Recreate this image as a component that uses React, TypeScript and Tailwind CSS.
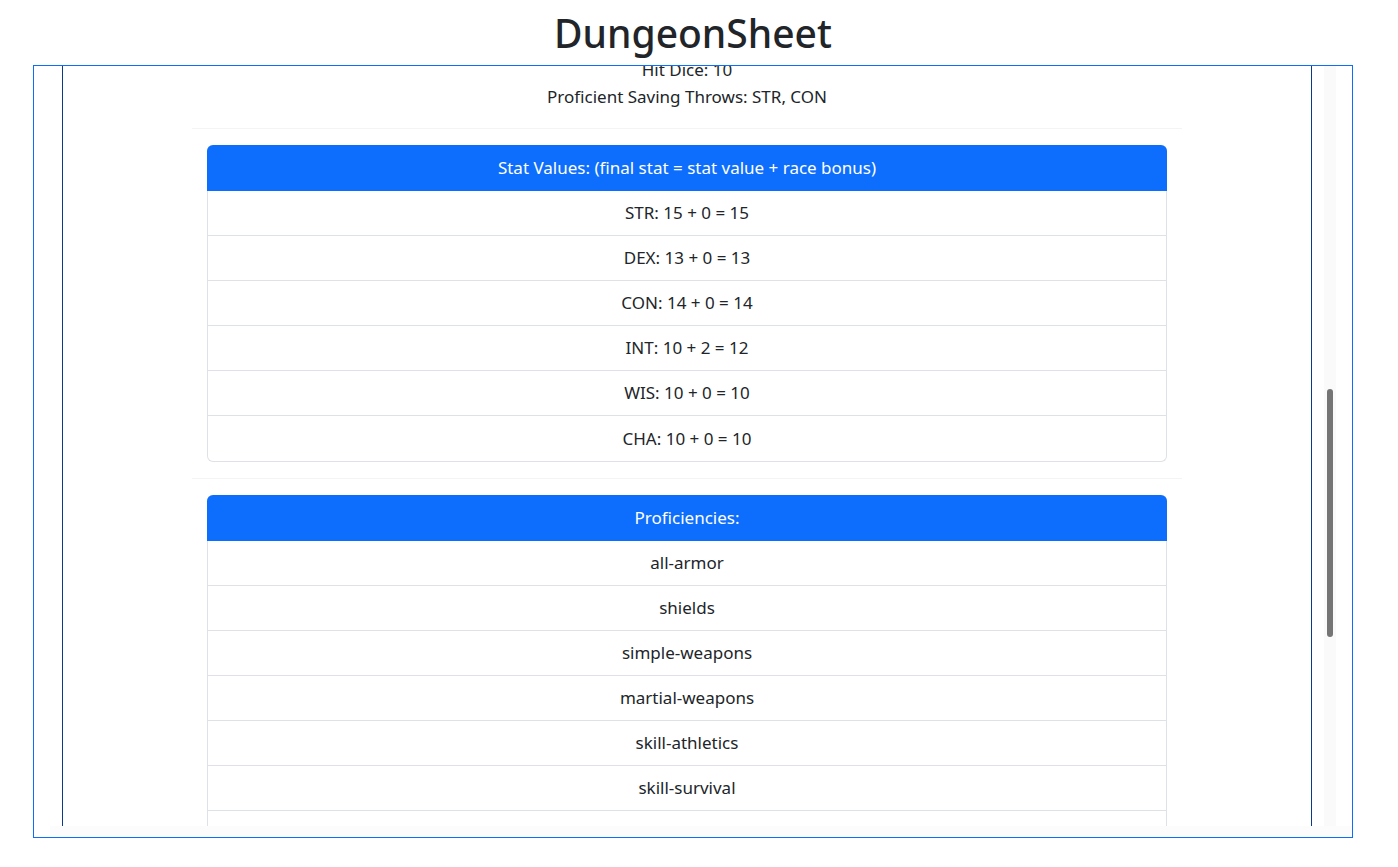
import React from "react";

const stats = [
  "STR: 15 + 0 = 15",
  "DEX: 13 + 0 = 13",
  "CON: 14 + 0 = 14",
  "INT: 10 + 2 = 12",
  "WIS: 10 + 0 = 10",
  "CHA: 10 + 0 = 10",
];

const profs = [
  "all-armor",
  "shields",
  "simple-weapons",
  "martial-weapons",
  "skill-athletics",
  "skill-survival",
  "skill-intimidation",
  "skill-perception",
];

function Card({ title, items }: { title: string; items: string[] }) {
  return (
    <div className="mx-[15px] rounded-md border border-[#dee2e6] border-t-0">
      <div className="h-[46px] -mx-px rounded-t-md bg-[#0d6efd] text-white flex items-center justify-center">
        {title}
      </div>
      {items.map((it, i) => (
        <div
          key={i}
          className={
            "h-[45px] flex items-center justify-center text-[#212529] " +
            (i < items.length - 1 ? "border-b border-[#dee2e6]" : "")
          }
        >
          {it}
        </div>
      ))}
    </div>
  );
}

export default function App() {
  return (
    <div
      className="w-[1398px] h-[867px] bg-white text-[17px] text-[#212529] overflow-hidden"
      style={{ fontFamily: '"Noto Sans", "Liberation Sans", sans-serif' }}
    >
      <div className="h-[65px] pt-[9px] pr-[12px]">
        <h1 className="text-center text-[39px] leading-[48px] font-medium text-[#212529]">
          DungeonSheet
        </h1>
      </div>
      <div className="ml-[33px] w-[1320px] h-[773px] border border-[#0d6efd] flex flex-col">
        <div className="flex h-[760px]">
          <div className="w-[28px] shrink-0" />
          <div className="w-[1250px] shrink-0 border-x border-[#0a3a8a] overflow-hidden">
            <div className="w-[990px] mx-auto -mt-[10px]">
              <div className="pb-[18px] border-b border-[#f3f4f5] text-center leading-[27px]">
                <div>Hit Dice: 10</div>
                <div>Proficient Saving Throws: STR, CON</div>
              </div>
              <div className="pt-[16px] pb-[16px] border-b border-[#f3f4f5]">
                <Card title="Stat Values: (final stat = stat value + race bonus)" items={stats} />
              </div>
              <div className="pt-[16px] pb-[17px]">
                <Card title="Proficiencies:" items={profs} />
              </div>
            </div>
          </div>
          <div className="flex-1 relative">
            <div className="absolute left-[12px] top-0 bottom-0 w-[12px] bg-[#fafafa]" />
            <div className="absolute left-[15px] top-[323px] w-[6px] h-[248px] rounded-full bg-[#757575]" />
          </div>
        </div>
        <div className="flex-1 flex">
          <div className="w-[16px] shrink-0" />
          <div className="flex-1 bg-[#fcfcfc]" />
        </div>
      </div>
    </div>
  );
}
